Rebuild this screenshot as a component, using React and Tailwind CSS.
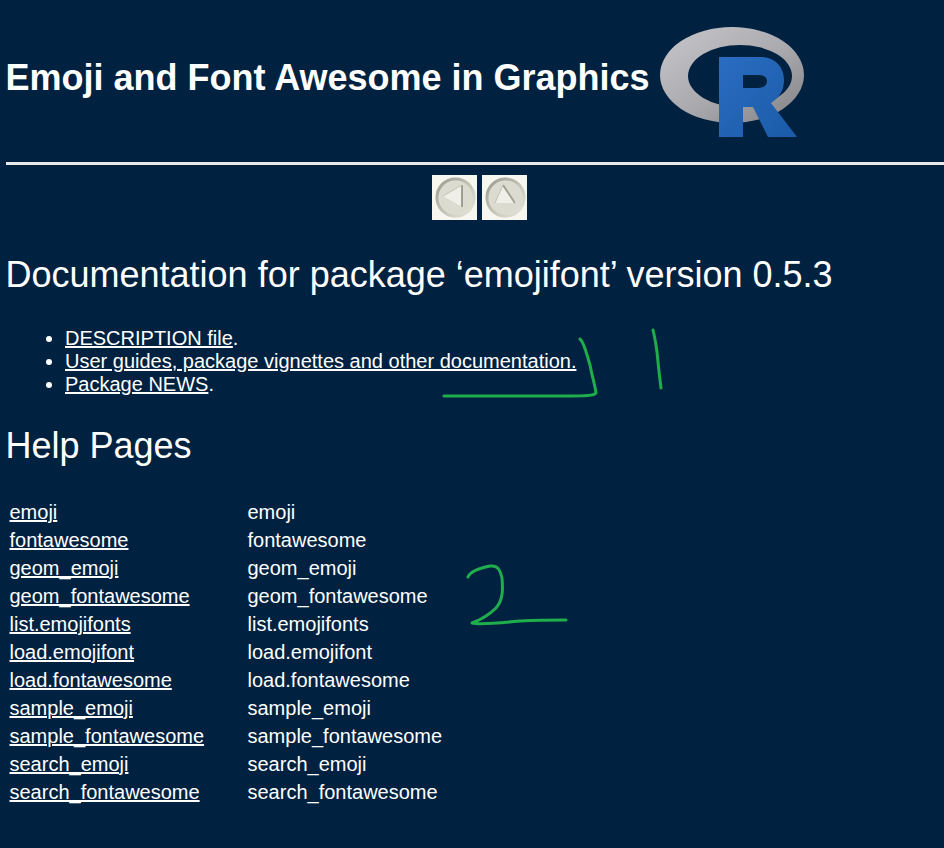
import React from "react";

const rows = ["emoji","fontawesome","geom_emoji","geom_fontawesome","list.emojifonts","load.emojifont","load.fontawesome","sample_emoji","sample_fontawesome","search_emoji","search_fontawesome"];

function RLogo() {
  return (
    <svg width="146" height="112" viewBox="0 0 146 112" className="shrink-0">
      <defs>
        <linearGradient id="ring" x1="0" y1="0" x2="1" y2="1">
          <stop offset="0" stopColor="#c8c8cc" />
          <stop offset="0.55" stopColor="#a9a9ad" />
          <stop offset="1" stopColor="#7f7f85" />
        </linearGradient>
        <linearGradient id="rb" x1="0" y1="0" x2="1" y2="1">
          <stop offset="0" stopColor="#2a6cc0" />
          <stop offset="1" stopColor="#1a5ba8" />
        </linearGradient>
      </defs>
      <path fillRule="evenodd" fill="url(#ring)" d="M0 48A72 48 0 1 0 144 48A72 48 0 1 0 0 48ZM28 49A52 31 0 1 1 132 49A52 31 0 1 1 28 49Z" />
      <path fillRule="evenodd" fill="url(#rb)" d="M59 30L100 30C116 30 124 41 124 53C124 64 119 71 111 76L137 110L108 110L93 80L83 80L83 110L59 110ZM83 48L83 61L98 61C104 61 107 58 107 54C107 50 104 48 98 48Z" />
    </svg>
  );
}

function NavIcon({ kind }) {
  return (
    <svg width="45" height="45" viewBox="0 0 45 45" className="block">
      <defs>
        <linearGradient id={`b${kind}`} x1="0" y1="0" x2="1" y2="1">
          <stop offset="0" stopColor="#9c9b8f" />
          <stop offset="1" stopColor="#e9e8dd" />
        </linearGradient>
      </defs>
      <rect width="45" height="45" fill="#f7f6ef" />
      <circle cx="23.5" cy="22.5" r="20" fill="#e3e2d7" />
      <circle cx="23.5" cy="22.5" r="18.5" fill="none" stroke={`url(#b${kind})`} strokeWidth="3" />
      <circle cx="23.5" cy="22.5" r="16.5" fill="#dcdbcf" />
      {kind === "left" ? (
        <>
          <path d="M11 21L30 10L30 32Z" fill="#efeee7" />
          <path d="M30 10L30 32" stroke="#a09f93" strokeWidth="2" />
          <path d="M11 21L30 10" stroke="#c4c3b7" strokeWidth="1" />
        </>
      ) : (
        <>
          <path d="M21 10L13 28L35 28Z" fill="#efeee7" />
          <path d="M21 10L33 28" stroke="#a09f93" strokeWidth="2" />
          <path d="M21 10L13 28" stroke="#c4c3b7" strokeWidth="1" />
        </>
      )}
    </svg>
  );
}

function Annotations() {
  return (
    <svg width="944" height="848" viewBox="0 0 944 848" fill="none" stroke="#1fae4b" strokeWidth="3" strokeLinecap="round" strokeLinejoin="round" className="absolute left-0 top-0 pointer-events-none">
      <path d="M580 339C584 342 586 352 590 365C592 376 595 385 596 393C594 396 585 396 570 396L444 396" />
      <path d="M653 330C656 342 657 350 658 362C659 372 660 380 661 388" />
      <path d="M468 577C470 572 480 568 490 566C498 565 500 570 502 578C503 590 503 600 496 608C490 614 480 620 472 623C480 625 500 623 520 621C540 620 555 620 566 620" />
    </svg>
  );
}

export default function App() {
  return (
    <div className="relative min-h-[848px] overflow-hidden bg-[#002240] text-white font-['Liberation_Sans',Arial,sans-serif]">
      <div className="pl-[5.5px]">
        <div className="flex items-start h-[162px]">
          <h1 className="text-[36px] font-bold leading-none mt-[60px] mr-2.5 whitespace-nowrap">Emoji and Font Awesome in Graphics</h1>
          <div className="mt-[27px]"><RLogo /></div>
        </div>
        <div className="h-[3px] bg-[#e8e8e8] -mr-2" />
        <div className="flex justify-center gap-[5px] mt-[10px] ml-[10px]">
          <NavIcon kind="left" />
          <NavIcon kind="up" />
        </div>
        <h2 className="text-[36px] font-normal leading-none mt-[37px] whitespace-nowrap">Documentation for package ‘emojifont’ version 0.5.3</h2>
        <ul className="list-disc mt-[34px] pl-[59.5px] text-[20px] leading-[23px]">
          <li><a className="underline">DESCRIPTION file</a>.</li>
          <li><a className="underline">User guides, package vignettes and other documentation.</a></li>
          <li><a className="underline">Package NEWS</a>.</li>
        </ul>
        <h2 className="text-[36px] font-normal leading-none mt-[32px]">Help Pages</h2>
        <div className="mt-[34px] ml-1 grid grid-cols-[238px_auto] text-[20px] leading-[28px]">
          {rows.map((r) => (
            <React.Fragment key={r}>
              <a className="underline">{r}</a>
              <span>{r}</span>
            </React.Fragment>
          ))}
        </div>
      </div>
      <Annotations />
    </div>
  );
}
